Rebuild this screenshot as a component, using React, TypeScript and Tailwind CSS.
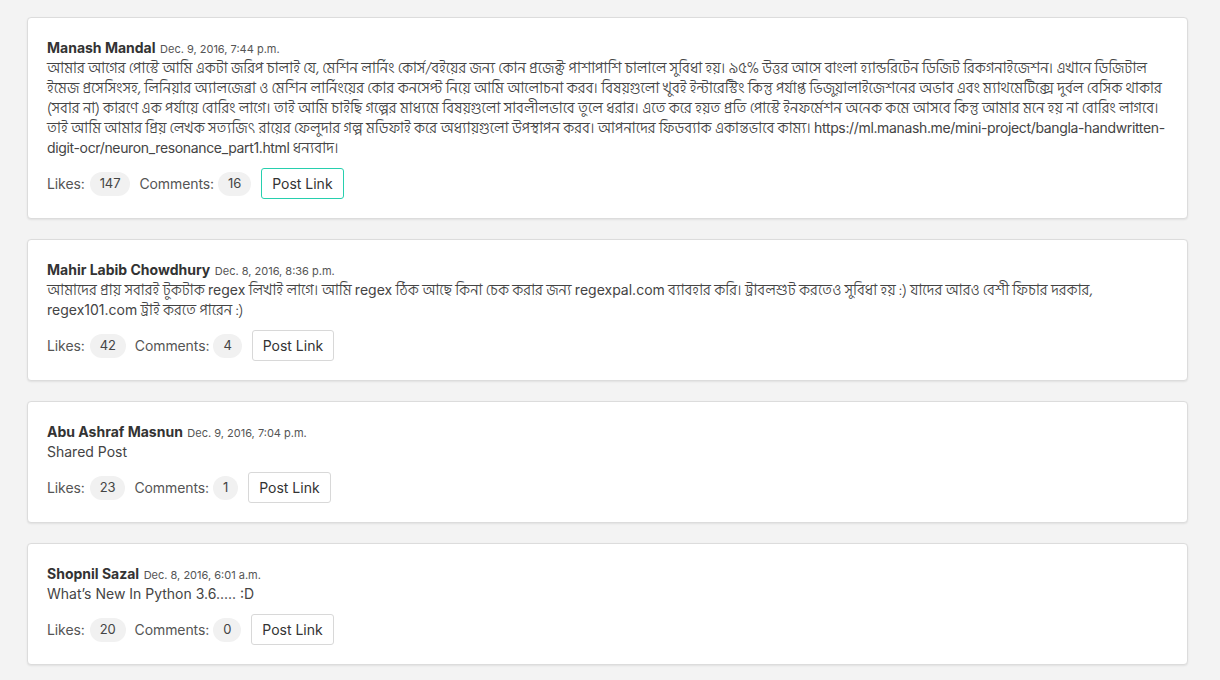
import React from 'react';

type Post = {
  author: string;
  date: string;
  body: string;
  likes: number;
  comments: number;
  focused?: boolean;
};

const posts: Post[] = [
  {
    author: 'Manash Mandal',
    date: 'Dec. 9, 2016, 7:44 p.m.',
    body:
      'আমার আগের পোস্টে আমি একটা জরিপ চালাই যে, মেশিন লার্নিং কোর্স/বইয়ের জন্য কোন প্রজেক্ট পাশাপাশি চালালে সুবিধা হয়। ৯৫% উত্তর আসে বাংলা হ্যান্ডরিটেন ডিজিট রিকগনাইজেশন। এখানে ডিজিটাল ইমেজ প্রসেসিংসহ, লিনিয়ার অ্যালজেব্রা ও মেশিন লার্নিংয়ের কোর কনসেপ্ট নিয়ে আমি আলোচনা করব। বিষয়গুলো খুবই ইন্টারেস্টিং কিন্তু পর্যাপ্ত ভিজুয়ালাইজেশনের অভাব এবং ম্যাথমেটিক্সে দুর্বল বেসিক থাকার (সবার না) কারণে এক পর্যায়ে বোরিং লাগে। তাই আমি চাইছি গল্পের মাধ্যমে বিষয়গুলো সাবলীলভাবে তুলে ধরার। এতে করে হয়ত প্রতি পোস্টে ইনফর্মেশন অনেক কমে আসবে কিন্তু আমার মনে হয় না বোরিং লাগবে। তাই আমি আমার প্রিয় লেখক সত্যজিৎ রায়ের ফেলুদার গল্প মডিফাই করে অধ্যায়গুলো উপস্থাপন করব। আপনাদের ফিডব্যাক একান্তভাবে কাম্য। https://ml.manash.me/mini-project/bangla-handwritten-digit-ocr/neuron_resonance_part1.html ধন্যবাদ।',
    likes: 147,
    comments: 16,
    focused: true,
  },
  {
    author: 'Mahir Labib Chowdhury',
    date: 'Dec. 8, 2016, 8:36 p.m.',
    body:
      'আমাদের প্রায় সবারই টুকটাক regex লিখাই লাগে। আমি regex ঠিক আছে কিনা চেক করার জন্য regexpal.com ব্যাবহার করি। ট্রাবলশুট করতেও সুবিধা হয় :) যাদের আরও বেশী ফিচার দরকার, regex101.com ট্রাই করতে পারেন :)',
    likes: 42,
    comments: 4,
  },
  {
    author: 'Abu Ashraf Masnun',
    date: 'Dec. 9, 2016, 7:04 p.m.',
    body: 'Shared Post',
    likes: 23,
    comments: 1,
  },
  {
    author: 'Shopnil Sazal',
    date: 'Dec. 8, 2016, 6:01 a.m.',
    body: 'What’s New In Python 3.6..... :D',
    likes: 20,
    comments: 0,
  },
];

// latin words and urls stay in the ui font, bangla runs get Hind Siliguri
const LATIN = /([A-Za-z0-9][A-Za-z0-9:/._\-’]*(?: [A-Za-z0-9:][A-Za-z0-9:/._\-’)]*)*)/;

const Body = ({ text }: { text: string }) => {
  const parts = text.split(LATIN).filter((p) => p.length > 0);
  return (
    <p className="text-[14px] leading-5 text-[#444]">
      {parts.map((p, i) => {
        if (!/^[A-Za-z0-9]/.test(p)) {
          return (
            <span key={i} className="font-['Hind_Siliguri',sans-serif] text-[15px] font-light leading-none">
              {p}
            </span>
          );
        }
        return (
          <span key={i} className={p.includes('://') ? 'tracking-[-0.35px]' : ''}>
            {p}
          </span>
        );
      })}
    </p>
  );
};

const Badge = ({ n }: { n: number }) => (
  <span className="inline-flex h-6 items-center rounded-full bg-[#f1f1f1] px-[10px] text-[13px] text-[#444]">
    {n}
  </span>
);

const PostCard = ({ post }: { post: Post }) => (
  <div className="rounded-[4px] border border-[#dcdcdc] bg-white px-[19px] pt-[19px] pb-[19px] shadow-[0_1px_2px_rgba(0,0,0,0.08)]">
    <div className="leading-5">
      <span className="text-[14px] font-bold text-[#333]">{post.author}</span>{' '}
      <span className="text-[11px] leading-none text-[#555]">{post.date}</span>
    </div>
    <Body text={post.body} />
    <div className="mt-[10px] flex items-center text-[14px] tracking-[-0.1px] text-[#555]">
      <span>Likes:</span>
      <span className="ml-[5px]">
        <Badge n={post.likes} />
      </span>
      <span className="ml-[9px]">Comments:</span>
      <span className="ml-[4px]">
        <Badge n={post.comments} />
      </span>
      <button
        className={
          'ml-[10px] h-[31px] rounded-[3px] border bg-white px-[10px] text-[14px] tracking-normal text-[#333] ' +
          (post.focused ? 'border-[#27cfae]' : 'border-[#d8d8d8]')
        }
      >
        Post Link
      </button>
    </div>
  </div>
);

export default function App() {
  return (
    <div className="min-h-[680px] bg-[#f3f3f3] px-[27px] pt-[17px] pb-6 font-['Inter',sans-serif]">
      <div className="flex w-[1161px] flex-col gap-5">
        {posts.map((p) => (
          <PostCard key={p.author} post={p} />
        ))}
      </div>
    </div>
  );
}
